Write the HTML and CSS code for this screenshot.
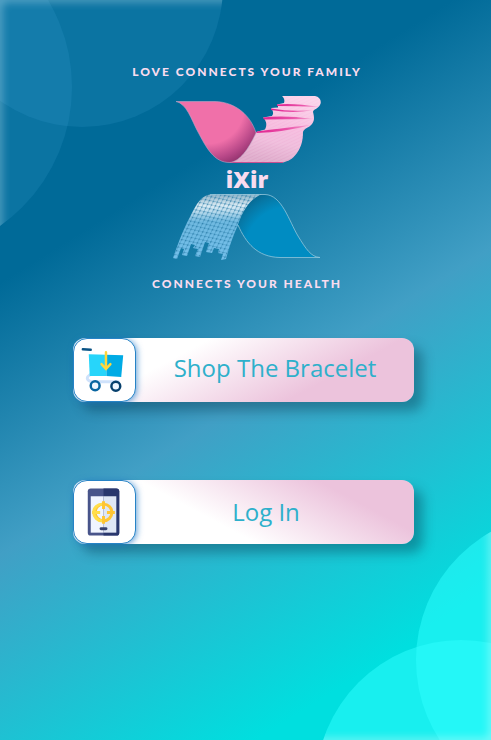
FILE: index.html
```html
<!DOCTYPE html>
<html lang="en">
<head>
<meta charset="utf-8">
<meta name="viewport" content="width=device-width, initial-scale=1">
<title>iXir</title>
<link rel="stylesheet" href="styles.css">
</head>
<body>
<svg class="bubbles bubbles-top" viewBox="0 0 240 240" aria-hidden="true">
  <defs>
    <filter id="soft" x="-20%" y="-20%" width="140%" height="140%"><feGaussianBlur stdDeviation="5"/></filter>
    <clipPath id="topClip"><circle cx="82" cy="-14" r="141"/><circle cx="-98" cy="87" r="170"/></clipPath>
  </defs>
  <circle cx="82" cy="-14" r="141" fill="#4fb4e0" fill-opacity=".14"/>
  <circle cx="-98" cy="87" r="170" fill="#4fb4e0" fill-opacity=".14"/>
  <g clip-path="url(#topClip)"><path d="M260 -2H-2V260" fill="none" stroke="#d8f0fa" stroke-width="6" opacity=".5" filter="url(#soft)"/></g>
</svg>
<svg class="bubbles bubbles-bottom" viewBox="311 520 180 220" aria-hidden="true">
  <defs>
    <clipPath id="bottomClip"><circle cx="563" cy="660" r="147"/><circle cx="461" cy="785" r="145"/></clipPath>
  </defs>
  <circle cx="563" cy="660" r="147" fill="#2fffff" fill-opacity=".5"/>
  <circle cx="461" cy="785" r="145" fill="#2fffff" fill-opacity=".5"/>
  <g clip-path="url(#bottomClip)"><path d="M493 500V742H290" fill="none" stroke="#fff" stroke-width="6" opacity=".5" filter="url(#soft)"/></g>
</svg>

<main class="page">
  <header class="brand">
    <p class="tagline">LOVE CONNECTS YOUR FAMILY</p>
    <svg class="ribbon" viewBox="172 94 150 71" aria-hidden="true">
      <defs>
        <radialGradient id="pink" gradientUnits="userSpaceOnUse" cx="208" cy="108" r="65">
          <stop offset=".55" stop-color="#f070a9"/><stop offset=".78" stop-color="#b84888"/><stop offset="1" stop-color="#7d265f"/>
        </radialGradient>
        <linearGradient id="blush" gradientUnits="userSpaceOnUse" x1="290" y1="96" x2="275" y2="163">
          <stop offset="0" stop-color="#fcd0e9"/><stop offset=".45" stop-color="#f6b9dd"/><stop offset=".7" stop-color="#efb9da"/><stop offset="1" stop-color="#dda7c8"/>
        </linearGradient>
        <linearGradient id="fold" x1="0" y1="0" x2="1" y2="0">
          <stop offset="0" stop-color="#e0218f"/><stop offset=".6" stop-color="#ea55aa"/><stop offset="1" stop-color="#f5aad5"/>
        </linearGradient>
        <pattern id="weave" width="3" height="3" patternUnits="userSpaceOnUse" patternTransform="rotate(-25)">
          <path d="M0 1H3" stroke="#fff" stroke-width=".6" stroke-opacity=".35"/>
        </pattern>
        <path id="drape" d="M282 96H315C320 97 322 101 320 105C318 109 313 109 313 112C314 116 315 120 312 124C309 128 304 128 303 132C303 141 301 147 297 153C292 160 288 161 283 162.500H230C241 159 249 147 256 132L265 129.500C267 126 267 121 263 117.500L272 116C274 113 273 111 271 108L278 107.500C278 106 278 105 277 104.500L284 103C285 100 284 98 282 96Z"/>
      </defs>
      <use href="#drape" fill="url(#blush)"/>
      <use href="#drape" fill="url(#weave)"/>
      <g fill="url(#fold)">
        <path d="M277 104.500Q295 103 319 107Q298 106 277 106Z"/>
        <path d="M271 108.500Q292 112 313 110Q294 114 271 110Z"/>
        <path d="M263 117.500Q285 115 313 119Q286 119 264 119.500Z"/>
        <path d="M257 131.500Q282 128 311 125Q285 132 256 133Z"/>
      </g>
      <path d="M230 162.500H283" stroke="#c84f91"/>
      <path d="M176 101.500H215C236 102 251 116 256 133C248 150 240 161 230 162.500C214 163 206 147 198 132C191 119 187 104 176 101.500Z" fill="url(#pink)" stroke="#bca5c5" stroke-width=".6"/>
    </svg>
    <h1 class="name">iXir</h1>
    <svg class="ribbon" viewBox="172 193 150 69" aria-hidden="true">
      <defs>
        <radialGradient id="blue" gradientUnits="userSpaceOnUse" cx="290" cy="252" r="70">
          <stop offset=".65" stop-color="#008cc2"/><stop offset=".82" stop-color="#0678a6"/><stop offset="1" stop-color="#075f86"/>
        </radialGradient>
        <linearGradient id="fade" x1="0" y1="0" x2="0" y2="1">
          <stop offset="0" stop-color="#8bb2c7"/><stop offset=".18" stop-color="#dcecf4"/><stop offset=".3" stop-color="#a9d3e9"/><stop offset=".42" stop-color="#6fb9e0"/><stop offset="1" stop-color="#72bfea"/>
        </linearGradient>
        <pattern id="mesh" width="4" height="4" patternUnits="userSpaceOnUse" patternTransform="rotate(12) skewX(-14)">
          <path d="M0 .5H4M.5 0V4" stroke="#2f86b2" stroke-opacity=".45" stroke-width=".7"/>
          <circle cx=".7" cy=".7" r=".7" fill="#1a6e9a" fill-opacity=".7"/>
        </pattern>
        <path id="stream" d="M213 194H262C252 199 245 211 238 225C233 236 229 247 226 259L221 260 223 254 218 253 219 249 214 248 212 253 206 252 209 243 205 242 200 257 195 256 198 249 193 248 195 245 191 244 187 256 182 255 184 249 181 248 177 259 173 258C179 241 183 230 190 217C197 203 201 195 213 194Z"/>
      </defs>
      <use href="#stream" fill="url(#fade)"/>
      <use href="#stream" fill="url(#mesh)"/>
      <path d="M238 225C243 209 253 194.500 265 194.500C282 195 289 221 298 236C306 249 311 257 320 257.500H280C257 257 246 243 238 225Z" fill="url(#blue)"/>
      <path d="M210 194.500H265C282 195 289 221 298 236C306 249 311 257 320 257.500H280C257 257 246 243 238 225" fill="none" stroke="#91c5da" stroke-width=".8"/>
    </svg>
    <p class="tagline">CONNECTS YOUR HEALTH</p>
  </header>

  <nav class="actions">
    <button class="action action-shop" type="button">
      <span class="tile">
        <svg class="icon" viewBox="0 0 62 62" aria-hidden="true">
          <path d="M9 10L17 10.500" stroke="#0a5385" stroke-width="2.500" stroke-linecap="round"/>
          <path d="M16 36C11 39 14 43 20 43H45" fill="none" stroke="#cfe2fb" stroke-width="3" stroke-linecap="round"/>
          <path d="M15 15L33 15.500V37H16Z" fill="#27d5fa"/>
          <path d="M33 15.500L50 16L48 38L33 37Z" fill="#00abe5"/>
          <path d="M32.500 13V29M28 25L32.500 30L37 25" fill="none" stroke="#ffd63b" stroke-width="2.500" stroke-linecap="round"/>
          <circle cx="21.500" cy="47" r="4.500" fill="#eef6ff" stroke="#0865a0" stroke-width="2.500"/>
          <circle cx="42.500" cy="47.500" r="4.500" fill="#eef6ff" stroke="#063f6c" stroke-width="2.500"/>
        </svg>
      </span>
      <span class="label">Shop The Bracelet</span>
    </button>
    <button class="action action-login" type="button">
      <span class="tile">
        <svg class="icon" viewBox="0 0 62 62" aria-hidden="true">
          <rect x="14" y="7" width="32" height="48" rx="3" fill="#48548a"/>
          <path d="M30 7H43Q46 7 46 10V52Q46 55 43 55H30Z" fill="#29376d"/>
          <path d="M17 15H30V52H17Z" fill="#f0f5ff"/><path d="M30 15H43V52H30Z" fill="#dfe7f5"/>
          <circle cx="30" cy="31.500" r="8.500" fill="none" stroke="#ffc533" stroke-width="3"/>
          <path d="M30 20V28M30 35V43M18.500 31.500H26.500M33.500 31.500H41.500" stroke="#ffc533" stroke-width="3"/>
          <path d="M28.500 23A8.500 8.500 0 0 0 28.500 40M18.500 31.500H26.500" fill="none" stroke="#ffde4b" stroke-width="3"/>
          <rect x="26" y="46.500" width="8" height="3" rx="1.500" fill="#38436f"/>
        </svg>
      </span>
      <span class="label">Log In</span>
    </button>
  </nav>
</main>
</body>
</html>
```
FILE: styles.css
```css
* {
  box-sizing: border-box;
}

body {
  position: relative;
  min-height: 100vh;
  margin: 0;
  overflow-x: hidden;
  background: linear-gradient(148deg, #006a98 27%, #419fc5 53%, #00dfdf 86%);
  font-family: "Open Sans", "Noto Sans", sans-serif;
}

.bubbles {
  position: absolute;
  display: block;
}

.bubbles-top {
  top: 0;
  left: 0;
  width: 240px;
}

.bubbles-bottom {
  right: 0;
  bottom: 0;
  width: 180px;
}

.page {
  position: relative;
  padding: 64px 0;
}

.brand {
  display: flex;
  flex-direction: column;
  align-items: center;
  padding-left: 3px;
  color: #f9dcef;
  font-family: Lato, sans-serif;
}

.tagline {
  margin: 0;
  font-size: 12px;
  font-weight: 900;
  line-height: 16px;
  letter-spacing: 2px;
  white-space: nowrap;
}

.ribbon {
  display: block;
  width: 150px;
}

.tagline + .ribbon {
  margin-top: 14px;
}

.ribbon + .tagline {
  margin-top: 14px;
}

.name {
  margin: 0;
  font-family: "Open Sans", sans-serif;
  font-size: 23px;
  font-weight: 800;
  line-height: 28px;
}

.actions {
  display: grid;
  gap: 78px;
  margin-top: 46px;
  padding: 0 77px 0 73px;
}

.action {
  display: flex;
  align-items: center;
  width: 100%;
  height: 64px;
  padding: 0;
  border: 0;
  border-radius: 12px;
  box-shadow: 9px 9px 12px rgba(0, 40, 60, 0.35);
  color: #2eb0cb;
  font-family: inherit;
  font-size: 24px;
  cursor: pointer;
}

.action-shop {
  background: linear-gradient(152deg, #fff 30%, #ecc3dc 72%);
}

.action-login {
  padding-right: 18px;
  background: linear-gradient(28deg, #fff 40%, #ecc3dc 79%);
}

.tile {
  flex: none;
  width: 63px;
  height: 64px;
  border: 1px solid #2783c6;
  border-radius: 14px;
  background: #fff;
  box-shadow: 1px 1px 6px rgba(30, 120, 200, 0.7);
}

.icon {
  display: block;
  width: 100%;
  height: 100%;
}

.label {
  flex: 1;
  line-height: 32px;
  text-align: center;
}

.action-shop .label {
  padding-bottom: 4px;
}
```
